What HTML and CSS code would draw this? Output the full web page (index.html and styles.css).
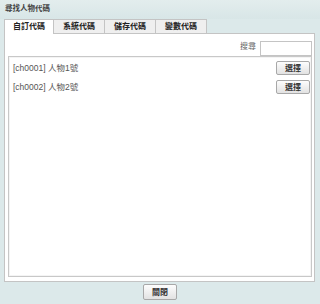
FILE: index.html
```html
<!doctype html>
<html lang="zh-Hant">

<head>
    <meta charset="utf-8">
    <title>尋找人物代碼</title>
    <link rel="stylesheet" href="styles.css">
</head>

<body>
    <div class="title">尋找人物代碼</div>

    <div class="tabs">
        <div class="tab active">自訂代碼</div>
        <div class="tab">系統代碼</div>
        <div class="tab">儲存代碼</div>
        <div class="tab">變數代碼</div>
    </div>

    <div class="panel">
        <div class="search">
            <label for="keyword">搜尋</label>
            <input type="text" id="keyword" class="search-input">
        </div>

        <div class="list">
            <div class="row">
                <span class="name">[ch0001] 人物1號</span>
                <button type="button" class="button">選擇</button>
            </div>
            <div class="row">
                <span class="name">[ch0002] 人物2號</span>
                <button type="button" class="button">選擇</button>
            </div>
        </div>
    </div>

    <div class="footer">
        <button type="button" class="button close">關閉</button>
    </div>
</body>

</html>
```

FILE: styles.css
```css
body {
    margin: 0;
    background-color: #dce9ea;
    font-family: "Liberation Sans", "Noto Sans CJK TC", sans-serif;
    font-size: 8px;
    color: #333;
}

.title {
    height: 19px;
    line-height: 17px;
    padding-left: 5px;
    font-size: 7.5px;
    font-weight: bold;
    color: #444;
    background: linear-gradient(#e3eded, #d8e6e7);
}

.tabs {
    display: flex;
    margin-left: 4px;
    height: 14px;
}

.tab {
    width: 51px;
    height: 14px;
    line-height: 14px;
    box-sizing: border-box;
    text-align: center;
    background-color: #efefef;
    border: 1px solid #c4c4c4;
    border-bottom: none;
    border-left: none;
    color: #222;
    font-weight: bold;
}

.tab.active {
    width: 50px;
    background-color: #fff;
    border-left: 1px solid #c4c4c4;
    height: 15px;
    position: relative;
    z-index: 1;
}

.panel {
    margin: 0 5px 0 4px;
    height: 249px;
    box-sizing: border-box;
    background-color: #fff;
    border: 1px solid #c4c4c4;
    display: flex;
    flex-direction: column;
    padding: 0 2px 4px 3px;
}

.search {
    height: 22px;
    display: flex;
    justify-content: flex-end;
    align-items: flex-end;
    gap: 4px;
}

.search label {
    line-height: 15px;
    padding-bottom: 2px;
    color: #666;
}

.search-input {
    width: 52px;
    height: 15px;
    box-sizing: border-box;
    border: 1px solid #c4c4c4;
    padding: 0;
    margin: 0;
}

.list {
    flex: 1;
    border: 1px solid #c8c8c8;
    box-shadow: inset 0 0 0 1px #f4f4f4;
    padding: 4px 1px 0 4px;
    display: flex;
    flex-direction: column;
    gap: 5px;
}

.row {
    display: flex;
    justify-content: space-between;
    align-items: center;
    height: 14px;
}

.name {
    font-size: 8.5px;
    line-height: 14px;
    color: #555;
}

.button {
    width: 34px;
    height: 14px;
    padding: 0;
    font-family: "Noto Sans CJK TC", sans-serif;
    font-size: 8px;
    font-weight: bold;
    line-height: 12px;
    color: #333;
    background: linear-gradient(#fdfdfd, #e2e2e2);
    border: 1px solid #a8a8a8;
    border-radius: 2px;
    cursor: pointer;
}

.footer {
    display: flex;
    justify-content: center;
    padding-top: 2px;
}

.close {
    width: 34px;
    height: 16px;
}
```
